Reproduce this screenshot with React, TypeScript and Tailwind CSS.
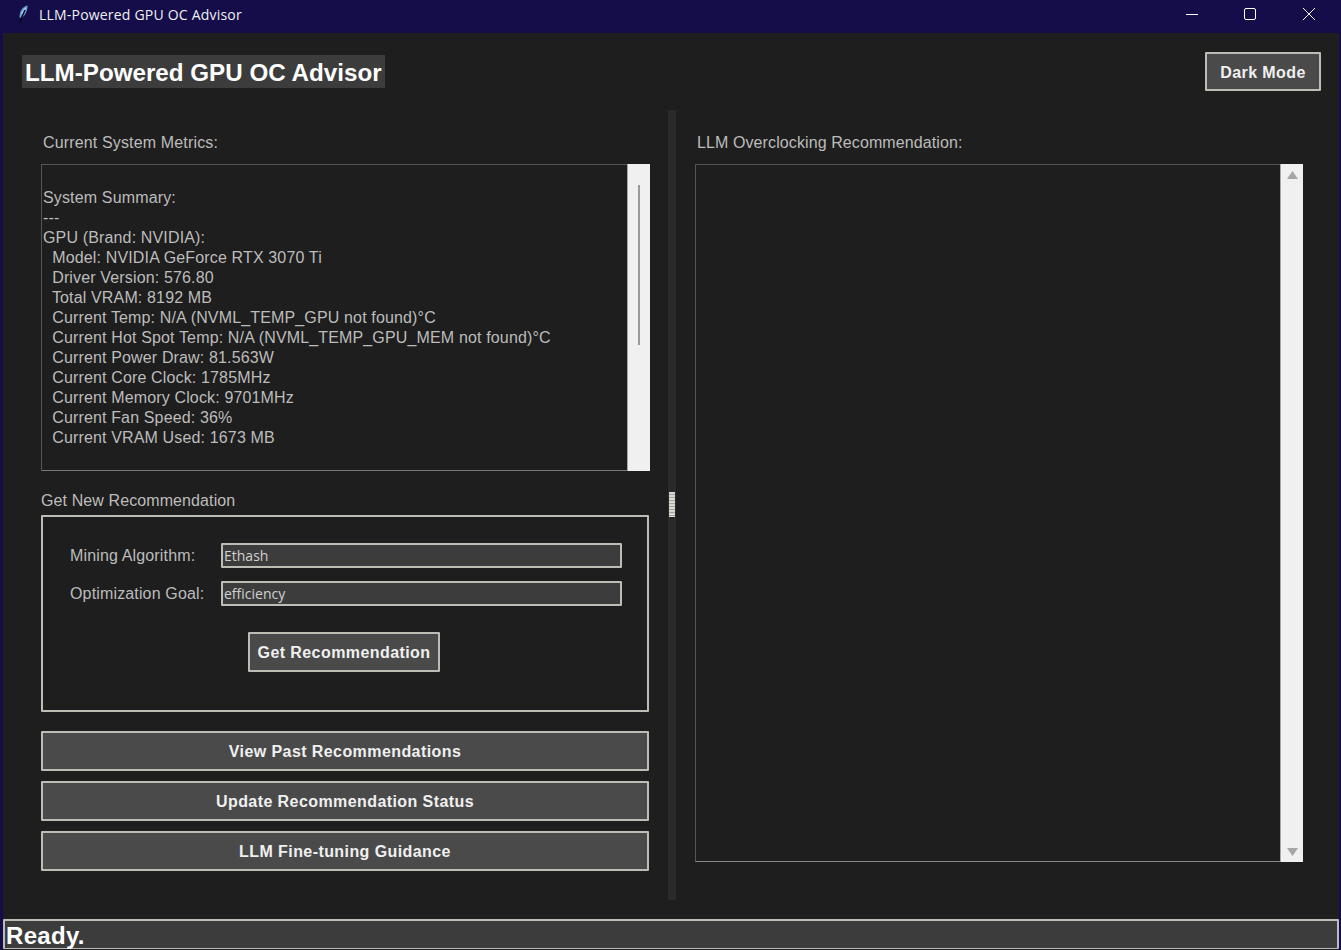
import React from "react";

const sans = "font-['Liberation_Sans',Arial,sans-serif]";
const ui = "font-['Open_Sans','Noto_Sans',sans-serif]";

const metricLines = [
  "System Summary:",
  "---",
  "GPU (Brand: NVIDIA):",
  "\u00a0 Model: NVIDIA GeForce RTX 3070 Ti",
  "\u00a0 Driver Version: 576.80",
  "\u00a0 Total VRAM: 8192 MB",
  "\u00a0 Current Temp: N/A (NVML_TEMP_GPU not found)°C",
  "\u00a0 Current Hot Spot Temp: N/A (NVML_TEMP_GPU_MEM not found)°C",
  "\u00a0 Current Power Draw: 81.563W",
  "\u00a0 Current Core Clock: 1785MHz",
  "\u00a0 Current Memory Clock: 9701MHz",
  "\u00a0 Current Fan Speed: 36%",
  "\u00a0 Current VRAM Used: 1673 MB",
];

function Btn({ children, className }: { children: React.ReactNode; className: string }) {
  return (
    <button
      className={`flex items-center justify-center pt-[2px] border-2 border-[#bdbdb5] rounded-[1px] bg-[#4a4a4a] text-[#f0f0f0] text-[16px] tracking-[0.42px] font-bold ${className}`}
    >
      {children}
    </button>
  );
}

function Field({ label, value }: { label: string; value: string }) {
  return (
    <div className="flex items-center h-[25px]">
      <span className="w-[151px] text-[16px] tracking-[0.15px] text-[#bcbcbc] whitespace-nowrap">{label}</span>
      <div className={`w-[401px] h-[25px] flex items-center pl-[1px] border-2 border-[#bdbdb5] rounded-[1px] bg-[#3c3c3c] text-[#d0d0d0] text-[14px] ${ui}`}>
        {value}
      </div>
    </div>
  );
}

export default function App() {
  return (
    <div className={`w-[1341px] h-[950px] overflow-hidden flex flex-col bg-[#1e1e1e] ${sans}`}>
      <div className={`h-[33px] shrink-0 flex items-center pb-[5px] bg-[#140d4a] text-[#f0f0f0] text-[14px] tracking-[0.2px] ${ui}`}>
        <svg width="10" height="18" viewBox="0 0 10 18" className="ml-[18px] mr-[11px]">
          <path d="M9.5 0.5 C4.5 1.5 1.5 6 1.5 12.5 L3.8 13 C7.5 10 9.8 5 9.5 0.5 Z" fill="#6aa0d4" />
          <path d="M7.5 3 L3.5 9" stroke="#dbe8f5" strokeWidth="0.9" fill="none" />
          <path d="M7 5 L1.5 17.5" stroke="#05060f" strokeWidth="1.4" fill="none" />
        </svg>
        <span>LLM-Powered GPU OC Advisor</span>
        <div className="ml-auto flex items-center">
          <svg width="12" height="12" viewBox="0 0 12 12" className="mr-[46px]">
            <path d="M0 6.5H12" stroke="#fff" strokeWidth="1" />
          </svg>
          <svg width="12" height="12" viewBox="0 0 12 12" className="mr-[47px]">
            <rect x="0.5" y="0.5" width="11" height="11" rx="1.5" stroke="#fff" fill="none" />
          </svg>
          <svg width="12" height="12" viewBox="0 0 12 12" className="mr-[26px]">
            <path d="M0 0L12 12M12 0L0 12" stroke="#fff" strokeWidth="1" />
          </svg>
        </div>
      </div>

      <div className="flex-1 min-h-0 flex flex-col border-l-[3px] border-r-[2px] border-[#140d4a]">
        <div className="h-[77px] shrink-0 flex items-start justify-between pl-[19px] pr-[18px]">
          <h1 className="mt-[22px] h-[33px] px-[3px] pt-[3px] flex items-center bg-[#3c3c3c] text-[#ffffff] text-[24.2px] font-bold leading-none whitespace-nowrap">
            LLM-Powered GPU OC Advisor
          </h1>
          <Btn className="mt-[19px] w-[116px] h-[39px]">Dark Mode</Btn>
        </div>

        <div className="h-[790px] shrink-0 flex">
          <div className="w-[665px] shrink-0 pl-[38px]">
            <div className="h-[54px] pt-[23px] pl-[2px] text-[16px] tracking-[0.15px] leading-[20px] text-[#bcbcbc]">Current System Metrics:</div>
            <div className="w-[609px] h-[307px] flex border border-[#555555] border-b-[#777777]">
              <div className="flex-1 pt-[23px] pl-[1px] text-[16px] tracking-[0.15px] leading-[20px] text-[#bcbcbc] whitespace-nowrap overflow-hidden">
                {metricLines.map((l) => (
                  <div key={l}>{l}</div>
                ))}
              </div>
              <div className="w-[23px] shrink-0 -mt-px -mb-px -mr-px bg-[#f0f0f0] border-l border-[#a8a8a8] pt-[21px] pl-[10px]">
                <div className="w-[2px] h-[160px] bg-[#9a9a9a]" />
              </div>
            </div>

            <div className="h-[44px] pt-[20px] text-[16px] tracking-[0.1px] leading-[20px] text-[#bcbcbc]">Get New Recommendation</div>
            <div className="w-[608px] h-[197px] border-2 border-[#bdbdb5] rounded-[1px] pt-[26px] pl-[27px]">
              <div className="flex flex-col gap-[13px]">
                <Field label="Mining Algorithm:" value="Ethash" />
                <Field label="Optimization Goal:" value="efficiency" />
              </div>
              <Btn className="ml-[178px] mt-[26px] w-[192px] h-[40px]">Get Recommendation</Btn>
            </div>

            <div className="mt-[19px] w-[608px] flex flex-col gap-[10px]">
              <Btn className="w-full h-[40px]">View Past Recommendations</Btn>
              <Btn className="w-full h-[40px]">Update Recommendation Status</Btn>
              <Btn className="w-full h-[40px]">LLM Fine-tuning Guidance</Btn>
            </div>
          </div>

          <div className="w-[8px] shrink-0 bg-[#2a2a2a] flex items-center justify-center pb-[2px]">
            <div className="w-[6px] h-[25px] bg-[repeating-linear-gradient(to_bottom,#d8d8d0_0px,#d8d8d0_2px,#a8a8a0_2px,#a8a8a0_3px)]" />
          </div>

          <div className="flex-1 pl-[19px]">
            <div className="h-[54px] pt-[23px] pl-[2px] text-[16px] tracking-[0.1px] leading-[20px] text-[#bcbcbc]">LLM Overclocking Recommendation:</div>
            <div className="w-[608px] h-[698px] flex border border-[#555555] border-b-[#8a8a8a]">
              <div className="flex-1" />
              <div className="w-[23px] shrink-0 -mt-px -mb-px -mr-px bg-[#f0f0f0] border-l border-[#a8a8a8] flex flex-col items-center justify-between pt-[7px] pb-[6px]">
                <svg width="11" height="8" viewBox="0 0 11 8"><path d="M5.5 0L11 8H0Z" fill="#a6a6a6" /></svg>
                <svg width="11" height="8" viewBox="0 0 11 8"><path d="M0 0H11L5.5 8Z" fill="#a6a6a6" /></svg>
              </div>
            </div>
          </div>
        </div>

        <div className="mt-[19px] mb-[1px] h-[30px] shrink-0 flex items-center pt-[2px] border-2 border-[#bdbdb5] border-b-[1px] rounded-[1px] bg-[#3c3c3c] text-[#ffffff] text-[24px] tracking-[0.3px] font-bold leading-none pl-[1px]">
          Ready.
        </div>
      </div>
    </div>
  );
}
